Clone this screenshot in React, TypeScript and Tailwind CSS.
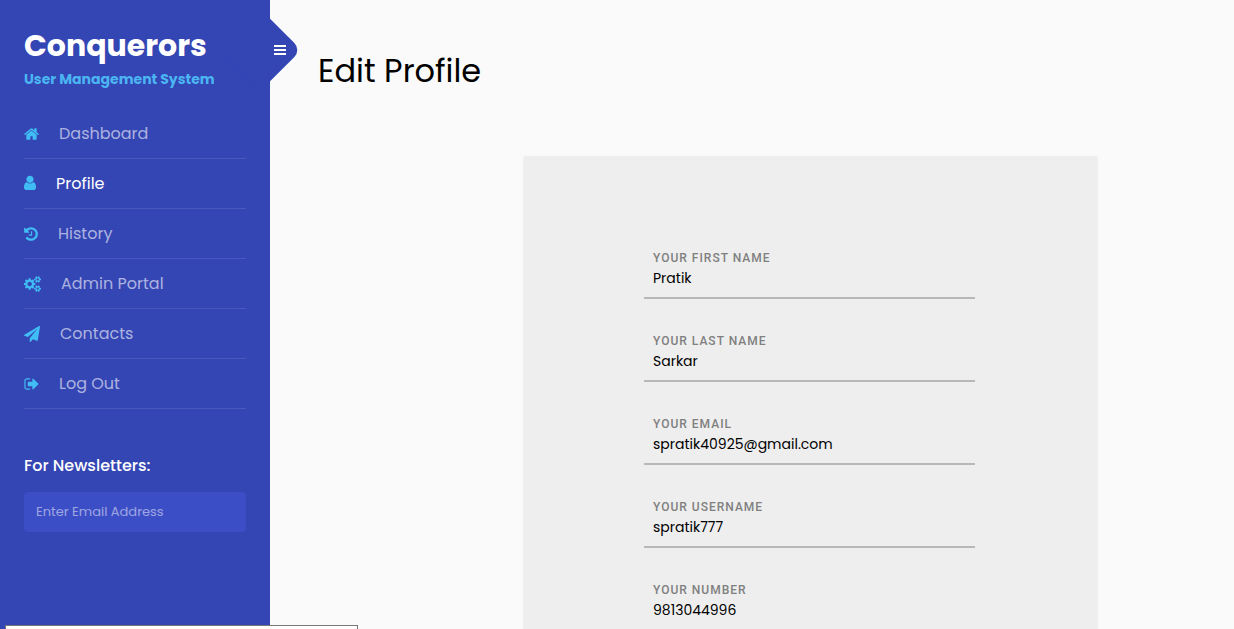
import React from "react";

type IconShape = { viewBox: string; size: string; path: string };

const icons: Record<string, IconShape> = {
  home: {
    viewBox: "64 0 1664 1792",
    size: "h-4 w-[15px]",
    path: "M1472 992v480q0 26-19 45t-45 19h-384v-384h-256v384h-384q-26 0-45-19t-19-45v-480q0-1 .5-3t.5-3l575-474 575 474q1 2 1 6zm223-69l-62 74q-8 9-21 11h-3q-13 0-21-7l-692-577-692 577q-12 8-24 7-13-2-21-11l-62-74q-8-10-7-23.5t11-21.5l719-599q32-26 76-26t76 26l244 204v-195q0-14 9-23t23-9h192q14 0 23 9t9 23v408l219 182q10 8 11 21.5t-7 23.5z",
  },
  user: {
    viewBox: "256 64 1280 1792",
    size: "h-[17px] w-[12px]",
    path: "M1536 1399q0 109-62.5 187t-150.5 78h-854q-88 0-150.5-78t-62.5-187q0-85 8.5-160.5t31.5-152 58.5-131 94-89 134.5-34.5q131 128 313 128t313-128q76 0 134.5 34.5t94 89 58.5 131 31.5 152 8.5 160.5zm-256-887q0 159-112.5 271.5t-271.5 112.5-271.5-112.5-112.5-271.5 112.5-271.5 271.5-112.5 271.5 112.5 112.5 271.5z",
  },
  history: {
    viewBox: "128 0 1536 1792",
    size: "h-4 w-[14px]",
    path: "M1664 896q0 156-61 298t-164 245-245 164-298 61q-172 0-327-72.5t-264-204.5q-7-10-6.5-22.5t8.5-20.5l137-138q10-9 25-9 16 2 23 12 73 95 179 147t225 52q104 0 198.5-40.5t163.5-109.5 109.5-163.5 40.5-198.5-40.5-198.5-109.5-163.5-163.5-109.5-198.5-40.5q-98 0-188 35.5t-160 101.5l137 138q31 30 14 69-17 40-59 40h-448q-26 0-45-19t-19-45v-448q0-42 40-59 39-17 69 14l130 129q107-101 244.5-156.5t284.5-55.5q156 0 298 61t245 164 164 245 61 298zm-640-288v448q0 14-9 23t-23 9h-320q-14 0-23-9t-9-23v-64q0-14 9-23t23-9h224v-352q0-14 9-23t23-9h64q14 0 23 9t9 23z",
  },
  cogs: {
    viewBox: "-64 0 1920 1792",
    size: "h-4 w-[17px]",
    path: "M832 896q0-106-75-181t-181-75-181 75-75 181 75 181 181 75 181-75 75-181zm768 512q0-52-38-90t-90-38-90 38-38 90q0 53 37.5 90.5t90.5 37.5 90.5-37.5 37.5-90.5zm0-1024q0-52-38-90t-90-38-90 38-38 90q0 53 37.5 90.5t90.5 37.5 90.5-37.5 37.5-90.5zm-384 421v185q0 10-7 19.5t-16 10.5l-155 24q-11 35-32 76 34 48 90 115 7 11 7 20 0 12-7 19-23 30-82.5 89.5t-78.5 59.5q-11 0-21-7l-115-90q-37 19-77 31-11 108-23 155-7 24-30 24h-186q-11 0-20-7.5t-10-17.5l-23-153q-34-10-75-31l-118 89q-7 7-20 7-11 0-21-8-144-133-144-160 0-9 7-19 10-14 41-53t47-61q-23-44-35-82l-152-24q-10-1-17-9.5t-7-19.5v-185q0-10 7-19.5t16-10.5l155-24q11-35 32-76-34-48-90-115-7-11-7-20 0-12 7-20 22-30 82-89t79-59q11 0 21 7l115 90q34-18 77-32 11-108 23-154 7-24 30-24h186q11 0 20 7.5t10 17.5l23 153q34 10 75 31l118-89q8-7 20-7 11 0 21 8 144 133 144 160 0 8-7 19-12 16-42 54t-45 60q23 48 34 82l152 23q10 2 17 10.5t7 19.5zm640 533v140q0 16-149 31-12 27-30 52 51 113 51 138 0 4-4 7-122 71-124 71-8 0-46-47t-52-68q-20 2-30 2t-30-2q-14 21-52 68t-46 47q-2 0-124-71-4-3-4-7 0-25 51-138-18-25-30-52-149-15-149-31v-140q0-16 149-31 13-29 30-52-51-113-51-138 0-4 4-7 4-2 35-20t59-34 30-16q8 0 46 46.5t52 67.5q20-2 30-2t30 2q51-71 92-112l6-2q4 0 124 70 4 3 4 7 0 25-51 138 17 23 30 52 149 15 149 31zm0-1024v140q0 16-149 31-12 27-30 52 51 113 51 138 0 4-4 7-122 71-124 71-8 0-46-47t-52-68q-20 2-30 2t-30-2q-14 21-52 68t-46 47q-2 0-124-71-4-3-4-7 0-25 51-138-18-25-30-52-149-15-149-31v-140q0-16 149-31 13-29 30-52-51-113-51-138 0-4 4-7 4-2 35-20t59-34 30-16q8 0 46 46.5t52 67.5q20-2 30-2t30 2q51-71 92-112l6-2q4 0 124 70 4 3 4 7 0 25-51 138 17 23 30 52 149 15 149 31z",
  },
  plane: {
    viewBox: "0 0 1792 1792",
    size: "h-4 w-4",
    path: "M1764 11q33 24 27 64l-256 1536q-5 29-32 45-14 8-31 8-11 0-24-5l-453-185-242 295q-18 23-49 23-13 0-22-4-19-7-30.5-23.5t-11.5-36.5v-349l864-1059-1069 925-395-162q-37-14-40-55-2-40 32-59l1664-960q15-9 32-9 20 0 36 11z",
  },
  signOut: {
    viewBox: "64 0 1600 1792",
    size: "h-4 w-[15px]",
    path: "M704 1440q0 4 1 20t.5 26.5-3 23.5-10 19.5-20.5 6.5h-320q-119 0-203.5-84.5t-84.5-203.5v-704q0-119 84.5-203.5t203.5-84.5h320q13 0 22.5 9.5t9.5 22.5q0 4 1 20t.5 26.5-3 23.5-10 19.5-20.5 6.5h-320q-66 0-113 47t-47 113v704q0 66 47 113t113 47h312l11.5 1 11.5 3 8 5.5 7 9 2 13.5zm928-544q0 26-19 45l-544 544q-19 19-45 19t-45-19-19-45v-288h-448q-26 0-45-19t-19-45v-384q0-26 19-45t45-19h448v-288q0-26 19-45t45-19 45 19l544 544q19 19 19 45z",
  },
};

const menu = [
  { label: "Dashboard", icon: "home" },
  { label: "Profile", icon: "user", active: true },
  { label: "History", icon: "history" },
  { label: "Admin Portal", icon: "cogs" },
  { label: "Contacts", icon: "plane" },
  { label: "Log Out", icon: "signOut" },
];

const fields = [
  { id: "first-name", label: "YOUR FIRST NAME", value: "Pratik", type: "text" },
  { id: "last-name", label: "YOUR LAST NAME", value: "Sarkar", type: "text" },
  { id: "email", label: "YOUR EMAIL", value: "spratik40925@gmail.com", type: "email" },
  { id: "username", label: "YOUR USERNAME", value: "spratik777", type: "text" },
  { id: "number", label: "YOUR NUMBER", value: "9813044996", type: "tel" },
];

function MenuIcon({ name }: { name: string }) {
  const icon = icons[name];
  return (
    <svg viewBox={icon.viewBox} className={`${icon.size} shrink-0 fill-[#41bdf5]`} aria-hidden="true">
      <path d={icon.path} />
    </svg>
  );
}

function Sidebar() {
  return (
    <aside className="relative w-[270px] shrink-0 bg-[#3445b4] px-6 pt-6">
      <button
        type="button"
        aria-label="Toggle Menu"
        className="absolute top-5 -right-[19px] flex size-[60px] rotate-45 items-center justify-center rounded-[10px] bg-[#3445b4]"
      >
        <svg viewBox="0 0 54 12" className="h-3 w-[54px] shrink-0 -rotate-45 fill-white" aria-hidden="true">
          <path d="M42 1h12v2H42zM42 5h12v2H42zM42 9h12v2H42z" />
        </svg>
      </button>

      <h1 className="text-[30px] leading-[44px] font-bold text-white">
        <a href="#">Conquerors</a>
      </h1>
      <p className="text-sm leading-[22px] font-bold text-[#4bb5f2]">User Management System</p>

      <nav className="mt-[19px]">
        <ul>
          {menu.map((item) => (
            <li key={item.label} className="border-b border-white/10">
              <a
                href="#"
                className={`flex h-[49px] items-center gap-5 text-base ${item.active ? "text-white" : "text-white/60"}`}
              >
                <MenuIcon name={item.icon} />
                {item.label}
              </a>
            </li>
          ))}
        </ul>
      </nav>

      <form className="mt-[45px]">
        <label htmlFor="newsletter" className="block text-base leading-6 font-medium text-white">
          For Newsletters:
        </label>
        <input
          id="newsletter"
          type="email"
          placeholder="Enter Email Address"
          className="mt-[14px] h-10 w-full rounded-[4px] bg-[#3c4ec6] px-3 text-[13px] text-white outline-none placeholder:text-white/50"
        />
      </form>
    </aside>
  );
}

export default function App() {
  return (
    <div className="relative flex h-screen overflow-hidden bg-[#fafafa] font-['Poppins','Inter',sans-serif] text-black">
      <Sidebar />

      <main className="min-w-0 flex-1 px-12 pt-12">
        <h2 className="text-[32px] leading-[46px]">Edit Profile</h2>
        <form className="mt-[62px] mr-[89px] ml-[206px] bg-[#eee] pt-[92px] pr-[122px] pb-20 pl-[120px] shadow-[0_1px_2px_rgba(0,0,0,0.12)]">
          {fields.map((field) => (
            <div key={field.id} className="mb-8 flex h-[51px] flex-col border-b-2 border-[#b8b8b8] px-[9px]">
              <label
                htmlFor={field.id}
                className="font-['Roboto',sans-serif] text-[12px] leading-5 font-medium tracking-[1px] text-[#808080]"
              >
                {field.label}
              </label>
              <input
                id={field.id}
                type={field.type}
                defaultValue={field.value}
                className="h-5 w-full bg-transparent text-sm outline-none"
              />
            </div>
          ))}
        </form>
      </main>

      <div className="absolute bottom-0 left-[5px] h-1 w-[353px] border border-b-0 border-[#777] bg-white" />
    </div>
  );
}
